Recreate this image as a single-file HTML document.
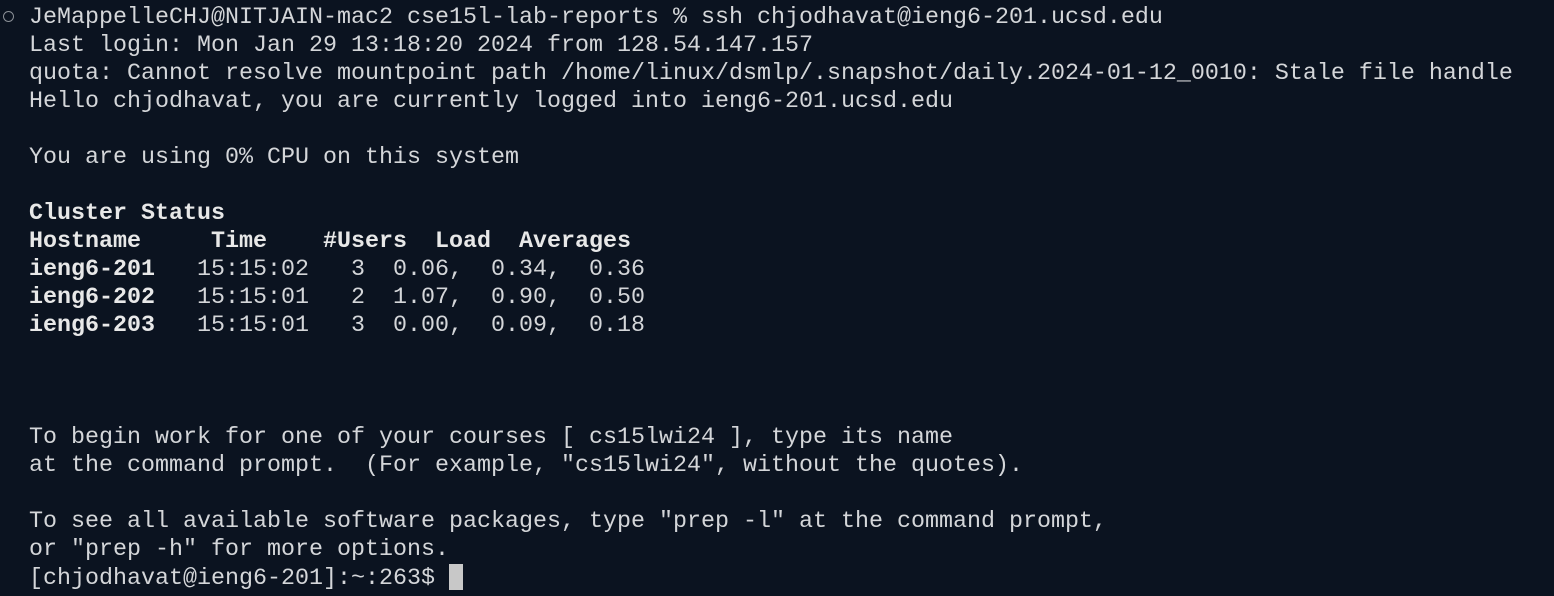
<!DOCTYPE html>
<html><head><style>
html,body{margin:0;padding:0;background:#0b1320;width:1554px;height:596px;overflow:hidden}
pre{margin:0;position:absolute;left:29px;top:4px;font-family:"Liberation Mono",monospace;font-size:23.33px;line-height:28px;color:#d4d6d9;white-space:pre}
b{font-weight:bold;color:#e8e8e8}
.c{display:inline-block;width:14px;height:26px;background:#c8c8c8;vertical-align:-6px}
.o{position:absolute;left:3px;top:11px;width:9px;height:9px;border:1.5px solid #8a8f96;border-radius:50%}
</style></head><body>
<div class="o"></div>
<pre>JeMappelleCHJ@NITJAIN-mac2 cse15l-lab-reports % ssh chjodhavat@ieng6-201.ucsd.edu
Last login: Mon Jan 29 13:18:20 2024 from 128.54.147.157
quota: Cannot resolve mountpoint path /home/linux/dsmlp/.snapshot/daily.2024-01-12_0010: Stale file handle
Hello chjodhavat, you are currently logged into ieng6-201.ucsd.edu

You are using 0% CPU on this system

<b>Cluster Status</b>
<b>Hostname     Time    #Users  Load  Averages</b>
<b>ieng6-201</b>   15:15:02   3  0.06,  0.34,  0.36
<b>ieng6-202</b>   15:15:01   2  1.07,  0.90,  0.50
<b>ieng6-203</b>   15:15:01   3  0.00,  0.09,  0.18



To begin work for one of your courses [ cs15lwi24 ], type its name
at the command prompt.  (For example, "cs15lwi24", without the quotes).

To see all available software packages, type "prep -l" at the command prompt,
or "prep -h" for more options.
[chjodhavat@ieng6-201]:~:263$ <span class="c"></span></pre>
</body></html>
